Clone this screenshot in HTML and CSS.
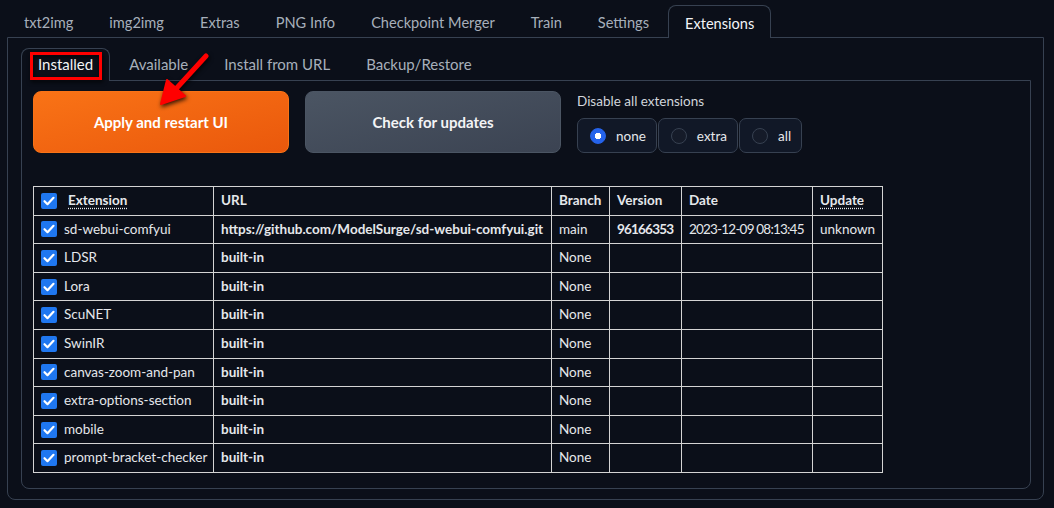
FILE: index.html
```html
<!DOCTYPE html>
<html lang="en">
<head>
    <meta charset="UTF-8">
    <meta name="viewport" content="width=device-width, initial-scale=1.0">
    <title>Stable Diffusion - Extensions</title>
    <link rel="stylesheet" href="styles.css">
</head>
<body>
    <div class="tab-nav top">
        <button class="tab">txt2img</button>
        <button class="tab">img2img</button>
        <button class="tab">Extras</button>
        <button class="tab">PNG Info</button>
        <button class="tab">Checkpoint Merger</button>
        <button class="tab">Train</button>
        <button class="tab">Settings</button>
        <button class="tab selected">Extensions</button>
    </div>
    <div class="panel">
        <div class="tab-nav sub">
            <button class="tab selected">Installed<span class="mark"></span></button>
            <button class="tab">Available</button>
            <button class="tab">Install from URL</button>
            <button class="tab">Backup/Restore</button>
        </div>
        <div class="panel inner">
            <div class="toolbar">
                <button class="btn primary">Apply and restart UI</button>
                <button class="btn secondary">Check for updates</button>
                <div class="disable-group">
                    <span class="group-label">Disable all extensions</span>
                    <div class="radios">
                        <label class="radio checked"><span class="dot"></span>none</label>
                        <label class="radio"><span class="dot"></span>extra</label>
                        <label class="radio"><span class="dot"></span>all</label>
                    </div>
                </div>
            </div>

            <table class="ext-table">
                <thead>
                    <tr>
                        <th class="c-name"><div class="cell-check"><span class="check"></span><abbr>Extension</abbr></div></th>
                        <th class="c-url">URL</th>
                        <th class="c-branch">Branch</th>
                        <th class="c-version">Version</th>
                        <th class="c-date">Date</th>
                        <th class="c-update"><abbr>Update</abbr></th>
                    </tr>
                </thead>
                <tbody id="ext-list">
                    <!-- rows are filled in by the script below -->
                </tbody>
            </table>
        </div>
    </div>

    <svg class="arrow" width="70" height="70" viewBox="150 45 70 70">
        <line x1="206" y1="56" x2="174" y2="91" stroke="#f00" stroke-width="5" stroke-linecap="round"/>
        <polygon points="161,104 167,80 185,96" fill="#f00" stroke="#f00" stroke-width="2" stroke-linejoin="round"/>
    </svg>

    <script>
        const extensions = [
            { name: 'sd-webui-comfyui', url: 'https://github.com/ModelSurge/sd-webui-comfyui.git', branch: 'main', version: '96166353', date: '2023-12-09 08:13:45', update: 'unknown' },
            { name: 'LDSR', url: 'built-in', branch: 'None' },
            { name: 'Lora', url: 'built-in', branch: 'None' },
            { name: 'ScuNET', url: 'built-in', branch: 'None' },
            { name: 'SwinIR', url: 'built-in', branch: 'None' },
            { name: 'canvas-zoom-and-pan', url: 'built-in', branch: 'None' },
            { name: 'extra-options-section', url: 'built-in', branch: 'None' },
            { name: 'mobile', url: 'built-in', branch: 'None' },
            { name: 'prompt-bracket-checker', url: 'built-in', branch: 'None' }
        ];

        const list = document.getElementById('ext-list');
        extensions.forEach(ext => {
            const row = document.createElement('tr');
            row.innerHTML = `
                <td><div class="cell-check"><span class="check"></span>${ext.name}</div></td>
                <td class="bold">${ext.url}</td>
                <td>${ext.branch}</td>
                <td class="bold digits">${ext.version || ''}</td>
                <td class="digits">${ext.date || ''}</td>
                <td>${ext.update || ''}</td>
            `;
            list.appendChild(row);
        });
    </script>
</body>
</html>
```

FILE: styles.css
```css
body {
    margin: 0;
    padding: 5px 10px 0 7px;
    background-color: #0b0f19;
    color: #e5e7eb;
    font-family: 'Lato', 'Liberation Sans', sans-serif;
    font-size: 13.5px;
    position: relative;
}

.tab-nav {
    display: flex;
    height: 32px;
}

.tab {
    font-family: inherit;
    font-size: 14.6px;
    color: #a7afbb;
    background: none;
    border: 1px solid transparent;
    border-bottom: none;
    border-radius: 8px 8px 0 0;
    padding: 0 16px 2px;
    margin: 0;
    position: relative;
}

.tab-nav.top .tab {
    padding: 2px 16px 0;
}

.tab-nav > .tab + .tab {
    margin-left: 2px;
}

.tab-nav.sub .tab {
    font-size: 15px;
}

.tab.selected {
    color: #f3f4f6;
    border-color: #374151;
    background-color: #0b0f19;
    margin-bottom: -1px;
    z-index: 1;
}

.panel {
    border: 1px solid #374151;
    border-radius: 0 0 8px 8px;
    padding: 10px 12px 10px 13px;
    height: 441px;
}

.panel.inner {
    height: 381px;
    padding: 10px 12px 16px 11px;
}

/* red annotation box around the active sub tab */
.mark {
    position: absolute;
    left: 8px;
    top: 3px;
    width: 66px;
    height: 22px;
    border: 3px solid #f00;
    filter: drop-shadow(1px 2px 2px rgba(0, 0, 0, 0.8));
}

.toolbar {
    display: flex;
    gap: 16px;
    height: 95px;
}

.btn {
    width: 256px;
    height: 62px;
    border-radius: 8px;
    font-family: inherit;
    font-size: 15px;
    font-weight: bold;
    color: #fff;
}

.btn.primary {
    background: linear-gradient(to bottom right, #f97316, #ea580c);
    border: 1px solid #f97316;
}

.btn.secondary {
    background: linear-gradient(to bottom right, #4b5563, #3b4352);
    border: 1px solid #4b5563;
    color: #f3f4f6;
}

.disable-group {
    display: flex;
    flex-direction: column;
    gap: 9px;
}

.group-label {
    color: #d1d5db;
    margin-top: 2px;
}

.radios {
    display: flex;
    gap: 1px;
}

.radio {
    display: flex;
    align-items: center;
    height: 33px;
    padding: 0 10px 0 12px;
    border: 1px solid #374151;
    border-radius: 7px;
    background-color: #111827;
    color: #e5e7eb;
    font-size: 13.5px;
}

.radio .dot {
    width: 14px;
    height: 14px;
    border-radius: 50%;
    border: 1px solid #374151;
    background-color: #151b29;
    margin-right: 10px;
}

.radio.checked .dot {
    border-color: #2563eb;
    background-image: radial-gradient(circle, #fff 0 3px, #2563eb 3.5px);
}

.ext-table {
    border-collapse: collapse;
    table-layout: fixed;
    width: 849px;
}

.ext-table th,
.ext-table td {
    box-sizing: border-box;
    border: 1px solid #d4d4d4;
    padding: 4px 6px 4px 7px;
    line-height: 19.6px;
    text-align: left;
    white-space: nowrap;
}

.ext-table th {
    font-weight: bold;
}

.ext-table .bold {
    font-weight: bold;
}

/* the digits of the fallback font run wider, pull them in */
.ext-table .digits {
    letter-spacing: -0.8px;
}

.c-name { width: 180px; }
.c-url { width: 338px; }
.c-branch { width: 58px; }
.c-version { width: 72px; }
.c-date { width: 131px; }
.c-update { width: 70px; }

abbr {
    text-decoration: underline dotted;
    text-underline-offset: 3px;
}

th .cell-check abbr {
    margin-left: 4px;
}

.cell-check {
    display: flex;
    align-items: center;
    gap: 7px;
}

.check {
    width: 16px;
    height: 16px;
    border-radius: 2px;
    background: #1f77f0 url("data:image/svg+xml,%3Csvg xmlns='http://www.w3.org/2000/svg' viewBox='0 0 16 16'%3E%3Cpath d='M3.5 8.2l3 3 6-6.4' fill='none' stroke='white' stroke-width='2.2' stroke-linecap='round' stroke-linejoin='round'/%3E%3C/svg%3E") no-repeat center;
    flex: none;
}

.arrow {
    position: absolute;
    left: 150px;
    top: 45px;
    filter: drop-shadow(1px 2px 2px rgba(0, 0, 0, 0.8));
}
```
